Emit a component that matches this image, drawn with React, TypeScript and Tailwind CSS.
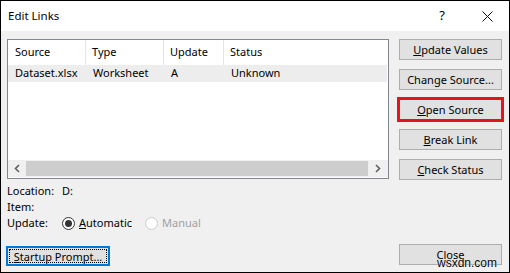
import React from "react";

const font = { fontFamily: '"Noto Sans", "Segoe UI", sans-serif' };

function Btn({ children, outlined }: { children: React.ReactNode; outlined?: boolean }) {
  return (
    <div
      className={
        "h-[21px] w-[103px] flex items-center justify-center border border-[#adadad] bg-[#e1e1e1] text-[11px] text-black leading-none whitespace-nowrap" +
        (outlined ? " outline-[3px] outline-solid outline-[#e3141b] -outline-offset-1" : "")
      }
    >
      {children}
    </div>
  );
}

function Radio({ checked, disabled }: { checked?: boolean; disabled?: boolean }) {
  return (
    <span
      className={
        "inline-flex h-[13px] w-[13px] items-center justify-center rounded-full border bg-white " +
        (disabled ? "border-[#cccccc]" : "border-[#333333]")
      }
    >
      {checked && <span className="h-[7px] w-[7px] rounded-full bg-[#333333]" />}
    </span>
  );
}

export default function App() {
  return (
    <div className="relative w-[510px] h-[273px] border border-black bg-[#f0f0f0] text-[11px] text-black" style={font}>
      {/* title bar */}
      <div className="h-[30px] bg-white flex items-center pl-[7px] pr-[14px]">
        <span className="text-[11.5px]">Edit Links</span>
        <span className="ml-auto mr-[37px] text-[13px]">?</span>
        <svg width="11" height="11" viewBox="0 0 11 11" className="mr-[2px]">
          <path d="M0.5 0.5 L10.5 10.5 M10.5 0.5 L0.5 10.5" stroke="#111" strokeWidth="1" />
        </svg>
      </div>

      <div className="flex pl-[6px] pt-[8px]">
        {/* left column */}
        <div className="w-[382px]">
          <div className="h-[140px] border border-[#828790] bg-white flex flex-col">
            <div className="h-[25px] flex items-stretch">
              <div className="w-[78px] pl-[7px] flex items-center border-r border-[#e5e5e5]">Source</div>
              <div className="w-[78px] pl-[6px] flex items-center border-r border-[#e5e5e5]">Type</div>
              <div className="w-[60px] pl-[6px] flex items-center border-r border-[#e5e5e5]">Update</div>
              <div className="pl-[6px] flex items-center">Status</div>
            </div>
            <div className="h-[17px] flex items-center bg-[#ededed] mr-[1px]">
              <div className="w-[78px] pl-[7px]">Dataset.xlsx</div>
              <div className="w-[78px] pl-[7px]">Worksheet</div>
              <div className="w-[60px] pl-[7px]">A</div>
              <div className="pl-[7px]">Unknown</div>
            </div>
            <div className="flex-1" />
            <div className="h-[17px] flex items-stretch bg-[#f0f0f0] mb-[1px]">
              <div className="w-[18px] flex items-center justify-center">
                <svg width="6" height="9" viewBox="0 0 6 9">
                  <path d="M5 1 L1.5 4.5 L5 8" stroke="#606060" strokeWidth="1.6" fill="none" />
                </svg>
              </div>
              <div className="flex-1 my-[1px] bg-[#cdcdcd]" />
              <div className="w-[20px] flex items-center justify-center">
                <svg width="6" height="9" viewBox="0 0 6 9">
                  <path d="M1 1 L4.5 4.5 L1 8" stroke="#606060" strokeWidth="1.6" fill="none" />
                </svg>
              </div>
            </div>
          </div>

          <div className="mt-[4px] leading-[16px]">
            <div className="flex">
              <span className="w-[55px]">Location:</span>
              <span>D:</span>
            </div>
            <div className="flex">
              <span className="w-[55px]">Item:</span>
            </div>
            <div className="flex items-center h-[16px]">
              <span className="w-[55px]">Update:</span>
              <Radio checked />
              <span className="ml-[4px]">
                <u>A</u>utomatic
              </span>
              <span className="ml-[13px] flex">
                <Radio disabled />
              </span>
              <span className="ml-[4px] text-[#a0a0a0]">Manual</span>
            </div>
          </div>

          <div className="mt-[15px] -ml-[1px] h-[20px] w-[104px] border-2 border-[#0078d7] bg-[#e1e1e1] p-[1px]">
            <div className="h-full w-full border border-dotted border-black flex items-center justify-center leading-none whitespace-nowrap">
              <span>
                <u>S</u>tartup Prompt...
              </span>
            </div>
          </div>
        </div>

        {/* right column */}
        <div className="ml-[10px] flex flex-col gap-[9px]">
          <Btn>
            <span>
              <u>U</u>pdate Values
            </span>
          </Btn>
          <Btn>
            <span>
              Chan<u>g</u>e Source...
            </span>
          </Btn>
          <Btn outlined>
            <span>
              <u>O</u>pen Source
            </span>
          </Btn>
          <Btn>
            <span>
              <u>B</u>reak Link
            </span>
          </Btn>
          <Btn>
            <span>
              <u>C</u>heck Status
            </span>
          </Btn>
          <div className="mt-[55px]">
            <Btn>
              <span>Close</span>
            </Btn>
          </div>
        </div>
      </div>

      <span
        className="absolute left-[436px] top-[256px] text-[12px] leading-none text-black"
        style={{ fontFamily: '"Liberation Sans", Arial, sans-serif', textShadow: "0 0 1px #fff, 0 0 1px #fff" }}
      >
        wsxdn.com
      </span>
    </div>
  );
}
